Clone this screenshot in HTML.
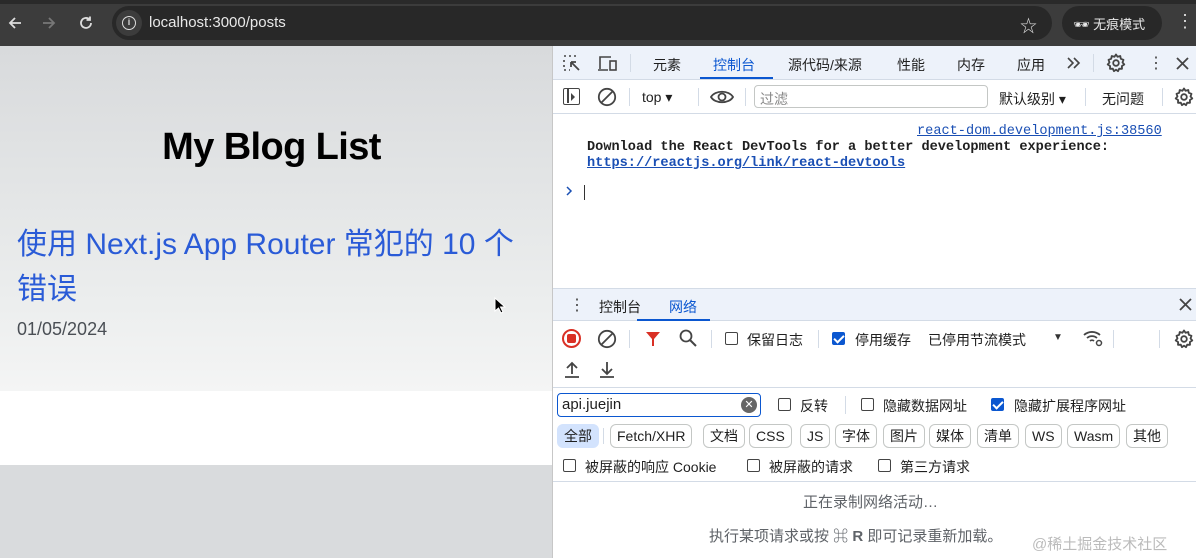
<!DOCTYPE html>
<html><head><meta charset="utf-8"><style>
*{margin:0;padding:0;box-sizing:border-box}
body{width:1196px;height:558px;overflow:hidden;position:relative;font-family:"Liberation Sans","Noto Sans CJK SC",sans-serif;background:#fff}
.a{position:absolute}
.t{font-size:14px;color:#1f1f1f;white-space:nowrap}
.cb{position:absolute;width:13px;height:13px;border:1px solid #444;border-radius:2px;background:#fff}
.cbc{background:#0b57d0;border-color:#0b57d0}
.cbc:after{content:"";position:absolute;left:3px;top:0px;width:4px;height:8px;border:solid #fff;border-width:0 2px 2px 0;transform:rotate(45deg)}
.pill{position:absolute;top:424px;height:24px;border:1px solid #c4c7c5;border-radius:6px;font-size:14px;line-height:22px;padding:0 6px;color:#1f1f1f}
.vs{position:absolute;width:1px;background:#d3dbe6}
.mono{font-family:'Liberation Mono',monospace;font-size:13.6px}
</style></head><body>
<svg width="0" height="0" style="position:absolute"><defs>
<symbol id="gear" viewBox="0 0 20 20"><path d="M10 1.5l1.6 2.3 2.7-.8.5 2.8 2.7 1-1 2.6 1.8 2.1-2.4 1.5.1 2.8-2.8-.1-1.2 2.5L10 16.7l-2 1.5-1.2-2.5-2.8.1.1-2.8L1.7 11.5l1.8-2.1-1-2.6 2.7-1 .5-2.8 2.7.8z" fill="none" stroke="#444" stroke-width="1.8" stroke-linejoin="round"/><circle cx="10" cy="10" r="2.8" fill="none" stroke="#444" stroke-width="1.8"/></symbol>
</defs></svg>
<!-- browser top -->
<div class="a" style="left:0;top:0;width:1196px;height:46px;background:#3c3c3c"></div>
<div class="a" style="left:0;top:0;width:1196px;height:4px;background:#2a2a2a"></div>
<svg class="a" style="left:7px;top:15px" width="16" height="16"><path d="M14 8H3M8 3L3 8l5 5" fill="none" stroke="#ddd" stroke-width="1.8"/></svg>
<svg class="a" style="left:41px;top:15px" width="16" height="16"><path d="M2 8h11M8 3l5 5-5 5" fill="none" stroke="#777" stroke-width="1.8"/></svg>
<svg class="a" style="left:78px;top:15px" width="16" height="16"><path d="M13 8a5 5 0 1 1-1.5-3.6M12 1.5v3.5H8.5" fill="none" stroke="#ddd" stroke-width="1.8"/></svg>
<div class="a" style="left:112px;top:6px;width:940px;height:34px;border-radius:17px;background:#282828"></div>
<div class="a" style="left:116px;top:10px;width:26px;height:26px;border-radius:13px;background:#3c3c3c"></div>
<div class="a" style="left:122px;top:16px;width:14px;height:14px;border-radius:7px;border:1.5px solid #ddd;font-size:9px;color:#ddd;text-align:center;line-height:11px;font-weight:bold">i</div>
<div class="a t" style="left:149px;top:14px;color:#e8e8e8;font-size:15px">localhost:3000/posts</div>
<div class="a t" style="left:1020px;top:12px;color:#ddd;font-size:17px">☆</div>
<div class="a" style="left:1062px;top:6px;width:100px;height:34px;border-radius:17px;background:#282828"></div>
<div class="a t" style="left:1073px;top:14px;color:#e8e8e8;font-size:13px">🕶 无痕模式</div>
<div class="a t" style="left:1176px;top:11px;color:#ddd;font-size:18px">⋮</div>
<!-- page -->
<div class="a" style="left:0;top:46px;width:552px;height:345px;background:linear-gradient(#d8dadc,#eceeee 75%,#f4f5f5)"></div>
<div class="a" style="left:0;top:391px;width:552px;height:74px;background:#fff"></div>
<div class="a" style="left:0;top:465px;width:552px;height:93px;background:#d9dbdd"></div>
<div class="a" style="left:0;top:126px;width:543px;text-align:center;font-size:38px;font-weight:bold;color:#000;letter-spacing:-0.6px">My Blog List</div>
<div class="a" style="left:17px;top:222px;width:520px;font-size:30px;line-height:45px;color:#2a5bd7;letter-spacing:0px">使用 Next.js App Router 常犯的 10 个<br>错误</div>
<div class="a t" style="left:17px;top:319px;font-size:18px;color:#4a4f55">01/05/2024</div>
<svg class="a" style="left:494px;top:297px" width="12" height="18"><path d="M1 1v13l3.5-3 2.5 5 2-1-2.5-5H11z" fill="#000" stroke="#fff" stroke-width="1"/></svg>
<!-- devtools -->
<div class="a" style="left:552px;top:46px;width:644px;height:512px;background:#fff;border-left:1px solid #c7c7c7"></div>
<div class="a" style="left:553px;top:46px;width:643px;height:34px;background:#edf2fa;border-bottom:1px solid #d3dbe6"></div>
<svg class="a" style="left:562px;top:54px" width="20" height="20"><path d="M2 2h2M7 2h2M12 2h2M2 6v2M2 11v2M2 16h2M7 16h1" stroke="#444" stroke-width="1.6" fill="none"/><path d="M9 8l8 8M9 8h5M9 8v5" stroke="#444" stroke-width="1.8" fill="none"/></svg>
<svg class="a" style="left:597px;top:55px" width="22" height="18"><path d="M3 14V2h11M1 15h10" stroke="#444" stroke-width="1.6" fill="none"/><rect x="13" y="6" width="6" height="9" stroke="#444" stroke-width="1.6" fill="none"/></svg>
<div class="vs" style="left:630px;top:54px;height:18px"></div>
<div class="a t" style="left:653px;top:55px">元素</div>
<div class="a t" style="left:713px;top:55px;color:#0b57d0">控制台</div>
<div class="a" style="left:700px;top:77px;width:73px;height:2px;background:#0b57d0"></div>
<div class="a t" style="left:788px;top:55px">源代码/来源</div>
<div class="a t" style="left:897px;top:55px">性能</div>
<div class="a t" style="left:957px;top:55px">内存</div>
<div class="a t" style="left:1017px;top:55px">应用</div>
<svg class="a" style="left:1066px;top:56px" width="16" height="14"><path d="M2 2l5 5-5 5M8 2l5 5-5 5" stroke="#444" stroke-width="1.6" fill="none"/></svg>
<div class="vs" style="left:1093px;top:54px;height:18px"></div>
<svg class="a" style="left:1106px;top:53px" width="20" height="20"><use href="#gear"/></svg>
<div class="a t" style="left:1148px;top:53px;font-size:16px;color:#444">⋮</div>
<svg class="a" style="left:1176px;top:57px" width="13" height="13"><path d="M1 1l11 11M12 1L1 12" stroke="#444" stroke-width="1.8"/></svg>
<!-- console toolbar -->
<div class="a" style="left:553px;top:80px;width:643px;height:34px;border-bottom:1px solid #d3dbe6"></div>
<div class="a" style="left:563px;top:88px;width:17px;height:17px;border:1.5px solid #444;border-radius:2px"></div>
<div class="a" style="left:567px;top:89px;width:1.5px;height:14px;background:#444"></div>
<svg class="a" style="left:570px;top:93px" width="6" height="8"><path d="M1 0l4 4-4 4z" fill="#444"/></svg>
<svg class="a" style="left:597px;top:87px" width="20" height="20"><circle cx="10" cy="10" r="8.2" stroke="#444" stroke-width="1.8" fill="none"/><path d="M4.5 15.5l11-11" stroke="#444" stroke-width="1.8"/></svg>
<div class="vs" style="left:629px;top:88px;height:18px"></div>
<div class="a t" style="left:642px;top:89px">top ▾</div>
<div class="vs" style="left:698px;top:88px;height:18px"></div>
<svg class="a" style="left:710px;top:88px" width="24" height="18"><path d="M1 9C5 2 19 2 23 9 19 16 5 16 1 9z" stroke="#444" stroke-width="1.8" fill="none"/><circle cx="12" cy="9" r="3.5" stroke="#444" stroke-width="1.8" fill="none"/></svg>
<div class="vs" style="left:745px;top:88px;height:18px"></div>
<div class="a" style="left:754px;top:85px;width:234px;height:23px;border:1px solid #c4c7c5;border-radius:4px"></div>
<div class="a t" style="left:760px;top:89px;color:#888">过滤</div>
<div class="a t" style="left:999px;top:89px">默认级别 ▾</div>
<div class="vs" style="left:1085px;top:88px;height:18px"></div>
<div class="a t" style="left:1102px;top:89px">无问题</div>
<div class="vs" style="left:1162px;top:88px;height:18px"></div>
<svg class="a" style="left:1174px;top:87px" width="20" height="20"><use href="#gear"/></svg>
<div class="a mono" style="left:917px;top:124px;color:#1a4fb4;text-decoration:underline">react-dom.development.js:38560</div>
<div class="a mono" style="left:587px;top:140px;font-weight:bold;color:#1f1f1f;line-height:16px">Download the React DevTools for a better development experience:<br><span style="color:#1a4fb4;text-decoration:underline">https://reactjs.org/link/react-devtools</span></div>
<svg class="a" style="left:566px;top:186px" width="8" height="10"><path d="M1 1l4 4-4 4" stroke="#1a4fb4" stroke-width="1.5" fill="none"/></svg>
<div class="a" style="left:584px;top:185px;width:1px;height:15px;background:#333"></div>
<!-- drawer -->
<div class="a" style="left:553px;top:288px;width:643px;height:33px;background:#edf2fa;border-top:1px solid #d3dbe6;border-bottom:1px solid #d3dbe6"></div>
<div class="a t" style="left:569px;top:295px;font-size:16px;color:#444">⋮</div>
<div class="a t" style="left:599px;top:297px">控制台</div>
<div class="a t" style="left:669px;top:297px;color:#0b57d0">网络</div>
<div class="a" style="left:637px;top:319px;width:73px;height:2px;background:#0b57d0"></div>
<svg class="a" style="left:1179px;top:298px" width="13" height="13"><path d="M1 1l11 11M12 1L1 12" stroke="#444" stroke-width="1.8"/></svg>
<!-- network toolbar -->
<div class="a" style="left:562px;top:329px;width:19px;height:19px;border:2px solid #d93025;border-radius:50%"></div>
<div class="a" style="left:567px;top:334px;width:9px;height:9px;background:#d93025;border-radius:2px"></div>
<svg class="a" style="left:597px;top:329px" width="20" height="20"><circle cx="10" cy="10" r="8.2" stroke="#444" stroke-width="1.8" fill="none"/><path d="M4.5 15.5l11-11" stroke="#444" stroke-width="1.8"/></svg>
<div class="vs" style="left:629px;top:330px;height:18px"></div>
<svg class="a" style="left:645px;top:331px" width="16" height="16"><path d="M1 1H15L9 8V15H7V8Z" fill="#d93025"/></svg>
<svg class="a" style="left:679px;top:329px" width="18" height="18"><circle cx="7" cy="7" r="5.5" stroke="#444" stroke-width="1.8" fill="none"/><path d="M11 11l6 6" stroke="#444" stroke-width="2"/></svg>
<div class="vs" style="left:711px;top:330px;height:18px"></div>
<div class="cb" style="left:725px;top:332px"></div><div class="a t" style="left:747px;top:330px">保留日志</div>
<div class="vs" style="left:818px;top:330px;height:18px"></div>
<div class="cb cbc" style="left:832px;top:332px"></div><div class="a t" style="left:855px;top:330px">停用缓存</div>
<div class="a t" style="left:928px;top:330px">已停用节流模式</div>
<div class="a t" style="left:1053px;top:332px;font-size:10px;color:#333">▼</div>
<svg class="a" style="left:1082px;top:329px" width="22" height="18"><path d="M2 6a12 12 0 0 1 16 0M5 9a7.5 7.5 0 0 1 10 0M8 12a3 3 0 0 1 4 0" stroke="#444" stroke-width="1.8" fill="none"/><circle cx="17" cy="14" r="2.5" stroke="#444" stroke-width="1.5" fill="none"/></svg>
<div class="vs" style="left:1113px;top:330px;height:18px"></div>
<div class="vs" style="left:1159px;top:330px;height:18px"></div>
<svg class="a" style="left:1174px;top:329px" width="20" height="20"><use href="#gear"/></svg>
<svg class="a" style="left:563px;top:361px" width="18" height="18"><path d="M9 13V2M4 7l5-5 5 5M2 16h14" stroke="#444" stroke-width="1.8" fill="none"/></svg>
<svg class="a" style="left:598px;top:361px" width="18" height="18"><path d="M9 1v12M4 8l5 5 5-5M2 16h14" stroke="#444" stroke-width="1.8" fill="none"/></svg>
<div class="a" style="left:553px;top:387px;width:643px;height:1px;background:#d3dbe6"></div>
<div class="a" style="left:557px;top:393px;width:204px;height:24px;border:1.5px solid #0b57d0;border-radius:4px"></div>
<div class="a t" style="left:562px;top:396px;font-size:15px">api.juejin</div>
<div class="a" style="left:741px;top:397px;width:16px;height:16px;border-radius:50%;background:#666;color:#fff;font-size:11px;text-align:center;line-height:16px">✕</div>
<div class="cb" style="left:778px;top:398px"></div><div class="a t" style="left:800px;top:396px">反转</div>
<div class="vs" style="left:845px;top:396px;height:18px"></div>
<div class="cb" style="left:861px;top:398px"></div><div class="a t" style="left:883px;top:396px">隐藏数据网址</div>
<div class="cb cbc" style="left:991px;top:398px"></div><div class="a t" style="left:1014px;top:396px">隐藏扩展程序网址</div>
<div class="pill" style="left:557px;border-color:#d3e3fd;background:#d3e3fd">全部</div>
<div class="vs" style="left:603px;top:428px;height:16px"></div>
<div class="pill" style="left:610px">Fetch/XHR</div>
<div class="pill" style="left:703px">文档</div>
<div class="pill" style="left:749px">CSS</div>
<div class="pill" style="left:800px">JS</div>
<div class="pill" style="left:835px">字体</div>
<div class="pill" style="left:883px">图片</div>
<div class="pill" style="left:929px">媒体</div>
<div class="pill" style="left:977px">清单</div>
<div class="pill" style="left:1025px">WS</div>
<div class="pill" style="left:1067px">Wasm</div>
<div class="pill" style="left:1126px">其他</div>
<div class="cb" style="left:563px;top:459px"></div><div class="a t" style="left:585px;top:457px">被屏蔽的响应 Cookie</div>
<div class="cb" style="left:747px;top:459px"></div><div class="a t" style="left:769px;top:457px">被屏蔽的请求</div>
<div class="cb" style="left:878px;top:459px"></div><div class="a t" style="left:900px;top:457px">第三方请求</div>
<div class="a" style="left:553px;top:481px;width:643px;height:1px;background:#d3dbe6"></div>
<div class="a t" style="left:803px;top:491px;color:#5f6368;font-size:15px">正在录制网络活动…</div>
<div class="a t" style="left:709px;top:525px;color:#5f6368;font-size:15px">执行某项请求或按 <b>⌘ R</b> 即可记录重新加载。</div>
<div class="a t" style="left:1032px;top:533px;color:#bbb;font-size:15px">@稀土掘金技术社区</div>
</body></html>
